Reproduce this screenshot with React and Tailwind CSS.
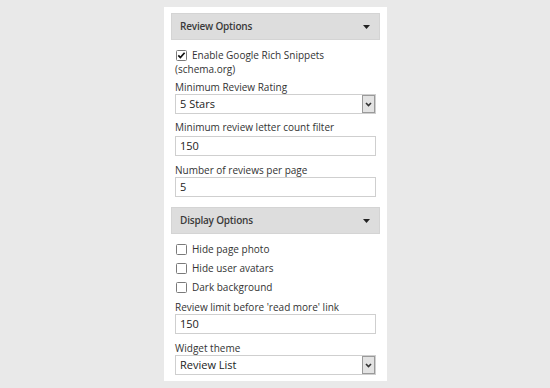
import React from "react";

const font = { fontFamily: '"Open Sans", "Noto Sans", sans-serif' };

function Header({ title, className = "" }) {
  return (
    <div className={"h-[27px] bg-[#dddddd] border border-[#d4d4d4] flex items-center justify-between pl-[8px] pr-[9px] " + className}>
      <span className="text-[10px] font-semibold text-[#3a3a3a] tracking-[-0.2px]">{title}</span>
      <svg width="7" height="4" viewBox="0 0 7 4"><path d="M0 0 L7 0 L3.5 4 Z" fill="#222" /></svg>
    </div>
  );
}

function Checkbox({ checked }) {
  return (
    <svg width="11" height="11" viewBox="0 0 11 11" className="shrink-0">
      <rect x="0.5" y="0.5" width="10" height="10" rx="1" fill="#fff" stroke="#7a7a7a" />
      {checked && <path d="M2.3 5.4 L4.4 7.6 L8.6 2.8" fill="none" stroke="#111" strokeWidth="1.7" />}
    </svg>
  );
}

function Input({ value, className = "" }) {
  return (
    <div className={"h-[20px] border border-[#cfcfcf] bg-white flex items-center pl-[4px] text-[11px] text-[#222] " + className}>
      {value}
    </div>
  );
}

function Select({ value, className = "" }) {
  return (
    <div className={"h-[20px] border border-[#cfcfcf] bg-white flex items-center justify-between pl-[4px] text-[11px] text-[#222] " + className}>
      <span>{value}</span>
      <div className="w-[13px] h-[18px] bg-[#e3e3e3] border border-[#9a9a9a] flex items-center justify-center">
        <svg width="7" height="5" viewBox="0 0 7 5"><path d="M1 1 L3.5 3.6 L6 1" fill="none" stroke="#333" strokeWidth="1.6" /></svg>
      </div>
    </div>
  );
}

function Label({ children, className = "" }) {
  return <div className={"text-[10px] leading-[14px] text-[#333] " + className}>{children}</div>;
}

function CheckRow({ label, checked, className = "" }) {
  return (
    <div className={"flex items-center h-[14px] " + className}>
      <div className="w-[17px] pl-[1px]"><Checkbox checked={checked} /></div>
      <span className="text-[10px] leading-[14px] text-[#333]">{label}</span>
    </div>
  );
}

export default function App() {
  return (
    <div className="w-[550px] h-[388px] bg-[#e9e9e9] overflow-hidden" style={font}>
      <div className="ml-[164px] mt-[7px] w-[223px] h-[374px] bg-white pt-[6px] px-[7px]">
        <Header title="Review Options" />
        <div className="px-[4px]">
          <div className="mt-[8px] text-[10px] leading-[14px] text-[#333]">
            <div className="flex items-center">
              <div className="w-[17px] pl-[1px]"><Checkbox checked /></div>
              <span>Enable Google Rich Snippets</span>
            </div>
            <div>(schema.org)</div>
          </div>
          <Label className="mt-[4px]">Minimum Review Rating</Label>
          <Select value="5 Stars" />
          <Label className="mt-[6px]">Minimum review letter count filter</Label>
          <Input value="150" className="mt-[2px]" />
          <Label className="mt-[7px]">Number of reviews per page</Label>
          <Input value="5" />
        </div>
        <Header title="Display Options" className="mt-[10px]" />
        <div className="px-[4px]">
          <CheckRow label="Hide page photo" className="mt-[8px]" />
          <CheckRow label="Hide user avatars" className="mt-[5px]" />
          <CheckRow label="Dark background" className="mt-[5px]" />
          <Label className="mt-[6px]">Review limit before 'read more' link</Label>
          <Input value="150" />
          <Label className="mt-[7px]">Widget theme</Label>
          <Select value="Review List" />
        </div>
      </div>
    </div>
  );
}
